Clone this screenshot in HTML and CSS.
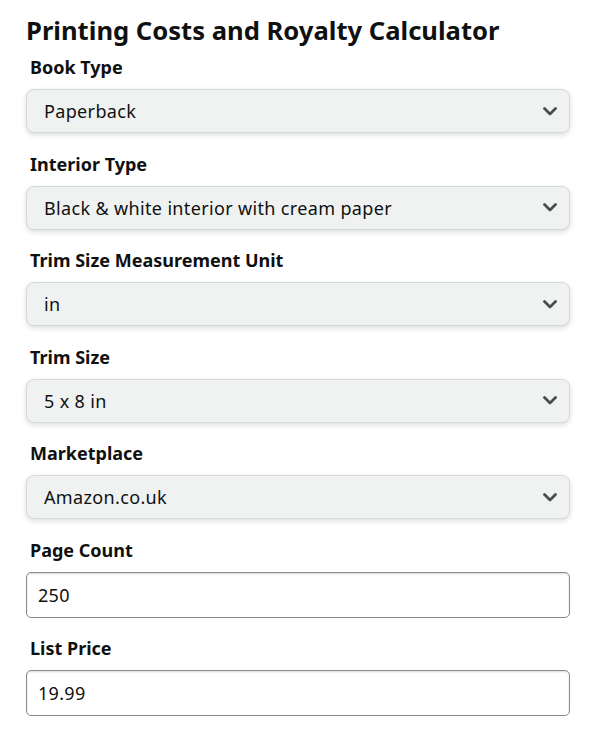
FILE: index.html
```html
<!DOCTYPE html>
<html lang="en">
<head>
<meta charset="utf-8">
<title>Printing Costs and Royalty Calculator</title>
<link rel="stylesheet" href="styles.css">
</head>
<body>
<main class="calc">
  <h1 class="title">Printing Costs and Royalty Calculator</h1>

  <div class="field">
    <label class="label">Book Type</label>
    <div class="select"><span>Paperback</span>
      <svg class="chev" viewBox="0 0 14 9" width="14" height="9"><path d="M1.5 1.5 L7 7 L12.5 1.5" fill="none" stroke="#4a4d4d" stroke-width="2.8" stroke-linecap="round" stroke-linejoin="round"/></svg>
    </div>
  </div>

  <div class="field">
    <label class="label">Interior Type</label>
    <div class="select"><span>Black &amp; white interior with cream paper</span>
      <svg class="chev" viewBox="0 0 14 9" width="14" height="9"><path d="M1.5 1.5 L7 7 L12.5 1.5" fill="none" stroke="#4a4d4d" stroke-width="2.8" stroke-linecap="round" stroke-linejoin="round"/></svg>
    </div>
  </div>

  <div class="field">
    <label class="label">Trim Size Measurement Unit</label>
    <div class="select"><span>in</span>
      <svg class="chev" viewBox="0 0 14 9" width="14" height="9"><path d="M1.5 1.5 L7 7 L12.5 1.5" fill="none" stroke="#4a4d4d" stroke-width="2.8" stroke-linecap="round" stroke-linejoin="round"/></svg>
    </div>
  </div>

  <div class="field">
    <label class="label">Trim Size</label>
    <div class="select"><span>5 x 8 in</span>
      <svg class="chev" viewBox="0 0 14 9" width="14" height="9"><path d="M1.5 1.5 L7 7 L12.5 1.5" fill="none" stroke="#4a4d4d" stroke-width="2.8" stroke-linecap="round" stroke-linejoin="round"/></svg>
    </div>
  </div>

  <div class="field">
    <label class="label">Marketplace</label>
    <div class="select"><span>Amazon.co.uk</span>
      <svg class="chev" viewBox="0 0 14 9" width="14" height="9"><path d="M1.5 1.5 L7 7 L12.5 1.5" fill="none" stroke="#4a4d4d" stroke-width="2.8" stroke-linecap="round" stroke-linejoin="round"/></svg>
    </div>
  </div>

  <div class="field">
    <label class="label">Page Count</label>
    <div class="input">250</div>
  </div>

  <div class="field">
    <label class="label">List Price</label>
    <div class="input">19.99</div>
  </div>
</main>
</body>
</html>
```

FILE: styles.css
```css
* { box-sizing: border-box; }
html, body { margin: 0; padding: 0; background: #ffffff; }
body {
  font-family: "Noto Sans", "Open Sans", Arial, sans-serif;
  color: #0f1111;
}
.calc {
  width: 544px;
  margin-left: 26px;
  padding-top: 15px;
}
.title {
  margin: 0 0 8px 0;
  font-size: 25.6px;
  line-height: 32px;
  font-weight: 700;
}
.field {
  display: flex;
  flex-direction: column;
  margin-bottom: 18.5px;
}
.label {
  display: block;
  font-size: 18px;
  line-height: 24px;
  font-weight: 700;
  padding-left: 4px;
  margin-bottom: 10px;
}
.select {
  height: 44px;
  display: flex;
  align-items: center;
  justify-content: space-between;
  padding: 0 12px 0 17px;
  background: #f0f2f2;
  border: 1px solid #d5d9d9;
  border-radius: 8px;
  box-shadow: 0 2px 5px rgba(15, 17, 17, 0.15);
  font-size: 18px;
  letter-spacing: 0.35px;
}
.chev { display: block; }
.input {
  height: 46px;
  display: flex;
  align-items: center;
  padding: 0 11px;
  background: #fff;
  border: 1px solid #888c8c;
  border-radius: 5px;
  box-shadow: 0 1px 2px rgba(15, 17, 17, 0.15) inset;
  font-size: 18px;
  letter-spacing: 0.3px;
}
```
